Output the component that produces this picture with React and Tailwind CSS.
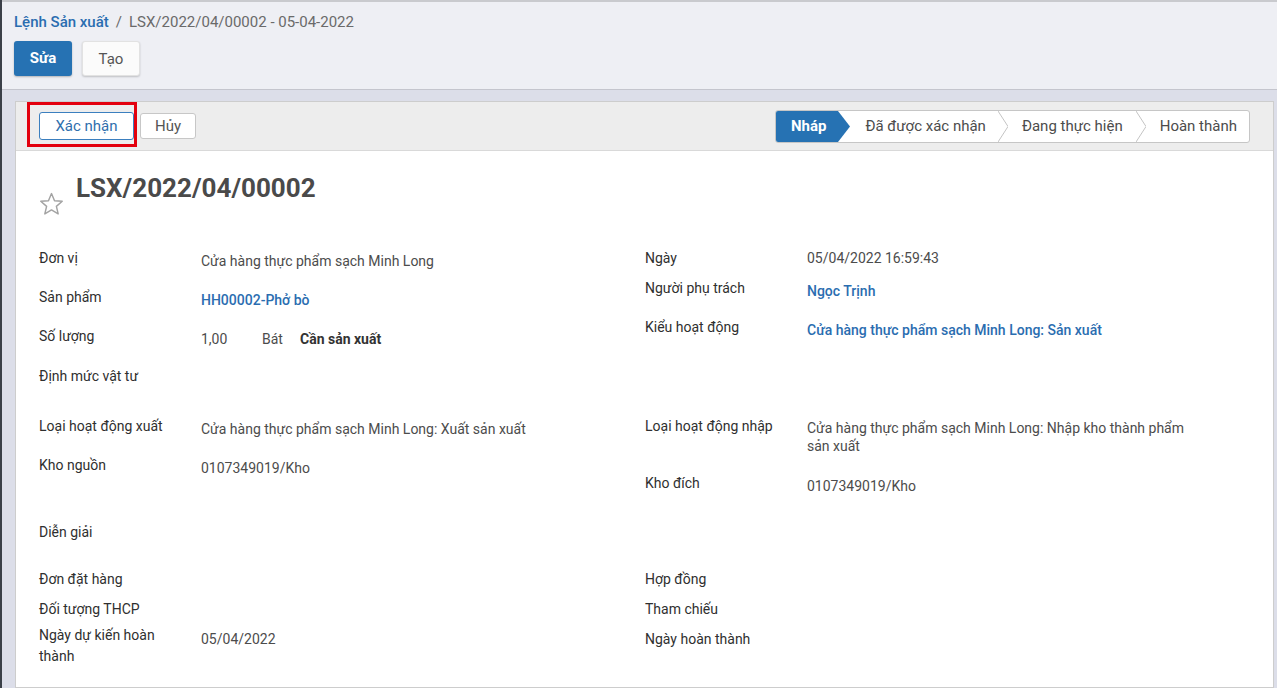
import React from "react";

function Star() {
  return (
    <svg width="25" height="24" viewBox="0 0 24 23" className="mt-[19px] shrink-0">
      <path
        d="M12 1.5 L14.9 8.3 L22.3 8.9 L16.7 13.8 L18.4 21 L12 17.2 L5.6 21 L7.3 13.8 L1.7 8.9 L9.1 8.3 Z"
        fill="none"
        stroke="#a3a3a3"
        strokeWidth="1.4"
        strokeLinejoin="round"
      />
    </svg>
  );
}

function Chevron() {
  return (
    <svg width="10" height="31" viewBox="0 0 10 31" className="shrink-0">
      <path d="M0 0 L10 15.5 L0 31" fill="none" stroke="#c4c4c4" strokeWidth="1" />
    </svg>
  );
}

function Row({ h, label, children, vpad }) {
  return (
    <div className={"flex " + h}>
      <div className="w-[162px] shrink-0 text-[14px] leading-[20px] text-[#2f2f2f]">{label}</div>
      <div className={"text-[14px] leading-[20px] text-[#4c4c4c] " + (vpad || "")}>{children}</div>
    </div>
  );
}

export default function App() {
  return (
    <div className="w-[1277px] h-[688px] overflow-hidden flex bg-[#dcdee9] font-['Roboto',sans-serif]">
      <div className="w-[2px] shrink-0 bg-[#3b4048]" />
      <div className="flex-1 flex flex-col min-w-0">
        {/* control panel */}
        <div className="border-t-2 border-[#c9cace] bg-[#eeeff4] border-b border-b-[#c4c5cd] px-[12px] pt-[10px] pb-[13px]">
          <div className="text-[15px] leading-[20px] flex items-center">
            <span className="text-[#2a6db0] font-medium">Lệnh Sản xuất</span>
            <span className="text-[#6a6a6a] mx-[7px]">/</span>
            <span className="text-[#6a6a6a]">LSX/2022/04/00002 - 05-04-2022</span>
          </div>
          <div className="flex gap-[10px] mt-[9px]">
            <button className="w-[58px] h-[35px] rounded-[3px] bg-[#2672b3] text-white text-[15px] font-bold shadow-[0_1px_2px_rgba(0,0,0,0.25)]">
              Sửa
            </button>
            <button className="w-[58px] h-[35px] rounded-[3px] bg-[#fbfbfb] text-[#555555] text-[15px] pt-[2px] border border-[#e2e2e2] shadow-[0_1px_2px_rgba(0,0,0,0.2)]">
              Tạo
            </button>
          </div>
        </div>

        {/* sheet area */}
        <div className="flex-1 pt-[11px] pl-[13px] pr-[3px] min-h-0">
          <div className="h-full border border-[#cdcdcd] bg-white flex flex-col">
            {/* status bar */}
            <div className="relative h-[49px] bg-[#ededed] border-b border-[#d9d9d9] flex items-center pl-[23px] pr-[23px]">
              <div className="absolute left-[11px] top-0 w-[110px] h-[45px] border-[3px] border-[#e3000d]" />
              <button className="w-[95px] h-[28px] rounded-[3px] border border-[#3b7fbf] bg-white text-[#2f6fad] text-[15px]">
                Xác nhận
              </button>
              <button className="ml-[6px] w-[56px] h-[26px] rounded-[3px] border border-[#c7c7c7] bg-white text-[#555555] text-[15px]">
                Hủy
              </button>
              <div className="ml-auto h-[33px] border border-[#c6c6c6] rounded-[3px] bg-white flex items-stretch overflow-hidden text-[15px] text-[#4c4c4c]">
                <div className="flex items-center bg-[#2672b3] pl-[15px] pr-[12px] text-white font-bold">Nháp</div>
                <svg width="12" height="31" viewBox="0 0 12 31" className="shrink-0">
                  <path d="M0 0 L12 15.5 L0 31 Z" fill="#2672b3" />
                </svg>
                <div className="flex items-center pl-[15px] pr-[12px]">Đã được xác nhận</div>
                <Chevron />
                <div className="flex items-center pl-[14px] pr-[13px]">Đang thực hiện</div>
                <Chevron />
                <div className="flex items-center pl-[14px] pr-[12px]">Hoàn thành</div>
              </div>
            </div>

            {/* body */}
            <div className="flex-1 pl-[23px] pt-[22px]">
              <div className="flex gap-[12px] h-[75px]">
                <Star />
                <div className="text-[26px] leading-[30px] font-bold text-[#4a4a4a]">LSX/2022/04/00002</div>
              </div>

              <div className="grid grid-cols-[606px_1fr]">
                {/* left column */}
                <div className="flex flex-col">
                  <Row h="h-[39px]" label="Đơn vị" vpad="pt-[3px]">
                    Cửa hàng thực phẩm sạch Minh Long
                  </Row>
                  <Row h="h-[39px]" label="Sản phẩm" vpad="pt-[3px]">
                    <span className="text-[#2a6db0] font-medium">HH00002-Phở bò</span>
                  </Row>
                  <Row h="h-[40px]" label="Số lượng" vpad="pt-[3px]">
                    <span className="inline-block w-[61px]">1,00</span>
                    <span className="inline-block w-[38px]">Bát</span>
                    <span className="font-bold text-[#333333]">Cần sản xuất</span>
                  </Row>
                  <Row h="h-[50px]" label="Định mức vật tư" />
                  <Row h="h-[39px]" label="Loại hoạt động xuất" vpad="pt-[3px]">
                    Cửa hàng thực phẩm sạch Minh Long: Xuất sản xuất
                  </Row>
                  <Row h="h-[67px]" label="Kho nguồn" vpad="pt-[3px]">
                    0107349019/Kho
                  </Row>
                  <Row h="h-[47px]" label="Diễn giải" />
                  <Row h="h-[30px]" label="Đơn đặt hàng" />
                  <Row h="h-[26px]" label="Đối tượng THCP" />
                  <div className="flex">
                    <div className="w-[128px] mr-[34px] text-[14px] leading-[21px] text-[#2f2f2f]">Ngày dự kiến hoàn thành</div>
                    <div className="pt-[4px] text-[14px] leading-[20px] text-[#4c4c4c]">05/04/2022</div>
                  </div>
                </div>

                {/* right column */}
                <div className="flex flex-col">
                  <Row h="h-[30px]" label="Ngày">
                    05/04/2022 16:59:43
                  </Row>
                  <Row h="h-[39px]" label="Người phụ trách" vpad="pt-[3px]">
                    <span className="text-[#2a6db0] font-medium">Ngọc Trịnh</span>
                  </Row>
                  <Row h="h-[99px]" label="Kiểu hoạt động" vpad="pt-[3px]">
                    <span className="text-[#2a6db0] font-medium">Cửa hàng thực phẩm sạch Minh Long: Sản xuất</span>
                  </Row>
                  <div className="flex h-[57px]">
                    <div className="w-[162px] shrink-0 text-[14px] leading-[20px] text-[#2f2f2f]">Loại hoạt động nhập</div>
                    <div className="w-[400px] pt-[3px] text-[14px] leading-[18px] text-[#4c4c4c]">
                      Cửa hàng thực phẩm sạch Minh Long: Nhập kho thành phẩm sản xuất
                    </div>
                  </div>
                  <Row h="h-[96px]" label="Kho đích" vpad="pt-[3px]">
                    0107349019/Kho
                  </Row>
                  <Row h="h-[30px]" label="Hợp đồng" />
                  <Row h="h-[30px]" label="Tham chiếu" />
                  <Row h="h-[30px]" label="Ngày hoàn thành" />
                </div>
              </div>
            </div>
          </div>
        </div>
      </div>
    </div>
  );
}
